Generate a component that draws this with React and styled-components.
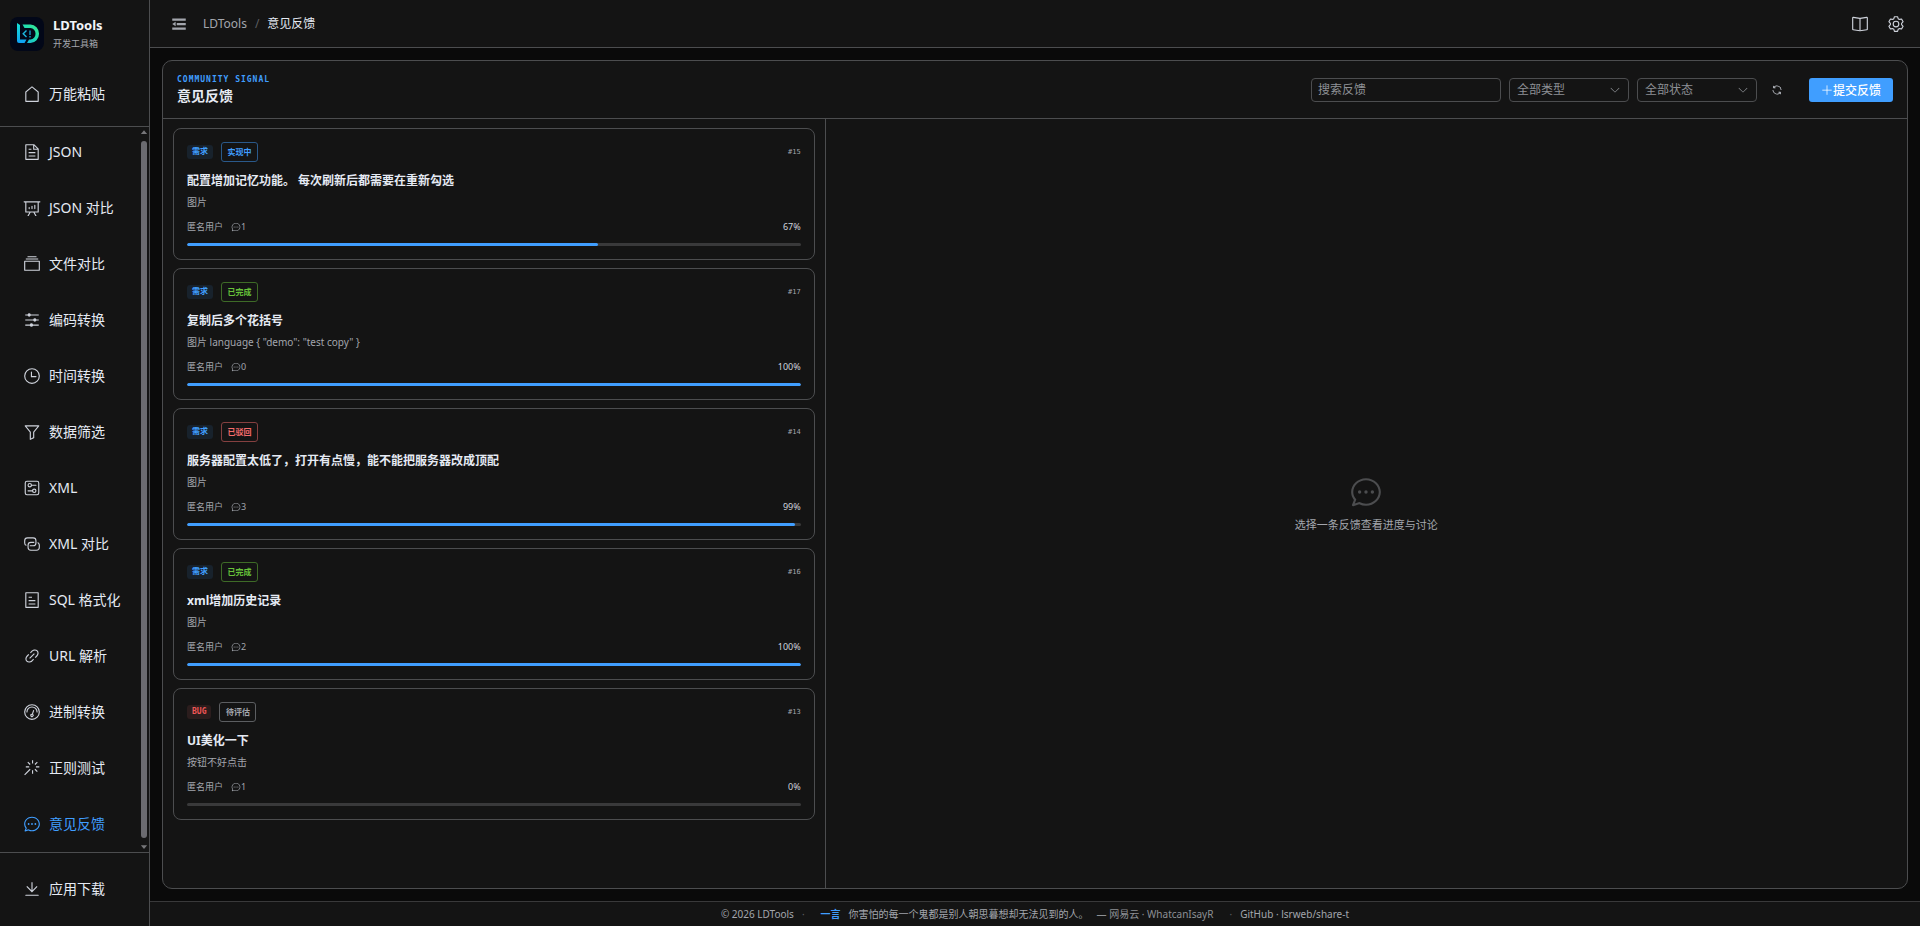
import React, { useState } from "react";
import styled, { createGlobalStyle } from "styled-components";

const icons = {
  house: ["M192 413.952V896h640V413.952L512 147.328zM139.52 374.4l352-293.312a32 32 0 0 1 40.96 0l352 293.312A32 32 0 0 1 896 398.976V928a32 32 0 0 1-32 32H160a32 32 0 0 1-32-32V398.976a32 32 0 0 1 11.52-24.576"],
  document: ["M832 384H576V128H192v768h640zm-26.496-64L640 154.496V320zM160 64h480l256 256v608a32 32 0 0 1-32 32H160a32 32 0 0 1-32-32V96a32 32 0 0 1 32-32m160 448h384v64H320zm0-192h160v64H320zm0 384h384v64H320z"],
  board: ["m665.216 768 110.848 192h-73.856L591.36 768H433.024L322.176 960H248.32l110.848-192H160a32 32 0 0 1-32-32V192H64a32 32 0 0 1 0-64h896a32 32 0 1 1 0 64h-64v544a32 32 0 0 1-32 32zM832 192H192v512h640zM352 448a32 32 0 0 1 32 32v64a32 32 0 0 1-64 0v-64a32 32 0 0 1 32-32m160-64a32 32 0 0 1 32 32v128a32 32 0 0 1-64 0V416a32 32 0 0 1 32-32m160-64a32 32 0 0 1 32 32v192a32 32 0 1 1-64 0V352a32 32 0 0 1 32-32"],
  files: ["M128 384v448h768V384zm-32-64h832a32 32 0 0 1 32 32v512a32 32 0 0 1-32 32H96a32 32 0 0 1-32-32V352a32 32 0 0 1 32-32m64-128h704v64H160zm96-128h512v64H256z"],
  operation: ["M389.44 768a96.064 96.064 0 0 1 181.12 0H896v64H570.56a96.064 96.064 0 0 1-181.12 0H128v-64zm192-288a96.064 96.064 0 0 1 181.12 0H896v64H762.56a96.064 96.064 0 0 1-181.12 0H128v-64zm-320-288a96.064 96.064 0 0 1 181.12 0H896v64H442.56a96.064 96.064 0 0 1-181.12 0H128v-64z"],
  clock: [
    "M512 896a384 384 0 1 0 0-768 384 384 0 0 0 0 768m0 64a448 448 0 1 1 0-896 448 448 0 0 1 0 896",
    "M480 256a32 32 0 0 1 32 32v256a32 32 0 0 1-64 0V288a32 32 0 0 1 32-32",
    "M480 512h256q32 0 32 32t-32 32H480q-32 0-32-32t32-32",
  ],
  filter: ["M384 523.392V928a32 32 0 0 0 46.336 28.608l192-96A32 32 0 0 0 640 832V523.392l280.768-343.104A32 32 0 0 0 896 128H128a32 32 0 0 0-24.768 52.288zM448 512a32 32 0 0 0-7.232-20.288L195.52 192h632.96L583.232 491.712A32 32 0 0 0 576 512v300.224l-128 64z"],
  setUp: [
    "M224 160a64 64 0 0 0-64 64v576a64 64 0 0 0 64 64h576a64 64 0 0 0 64-64V224a64 64 0 0 0-64-64zm0-64h576a128 128 0 0 1 128 128v576a128 128 0 0 1-128 128H224A128 128 0 0 1 96 800V224A128 128 0 0 1 224 96",
    "M384 416a64 64 0 1 0 0-128 64 64 0 0 0 0 128m0 64a128 128 0 1 1 0-256 128 128 0 0 1 0 256",
    "M480 320h256q32 0 32 32t-32 32H480q-32 0-32-32t32-32m160 416a64 64 0 1 0 0-128 64 64 0 0 0 0 128m0 64a128 128 0 1 1 0-256 128 128 0 0 1 0 256",
    "M288 640h256q32 0 32 32t-32 32H288q-32 0-32-32t32-32",
  ],
  connection: [
    "M640 384v64H448a128 128 0 0 0-128 128v128a128 128 0 0 0 128 128h320a128 128 0 0 0 128-128V576a128 128 0 0 0-64-110.848V394.88c74.56 26.368 128 97.472 128 181.056v128a192 192 0 0 1-192 192H448a192 192 0 0 1-192-192V576a192 192 0 0 1 192-192z",
    "M384 640v-64h192a128 128 0 0 0 128-128V320a128 128 0 0 0-128-128H256a128 128 0 0 0-128 128v128a128 128 0 0 0 64 110.848v70.272A192.06 192.06 0 0 1 64 448V320a192 192 0 0 1 192-192h320a192 192 0 0 1 192 192v128a192 192 0 0 1-192 192z",
  ],
  tickets: ["M192 128v768h640V128zm-32-64h704a32 32 0 0 1 32 32v832a32 32 0 0 1-32 32H160a32 32 0 0 1-32-32V96a32 32 0 0 1 32-32m160 448h384v64H320zm0-192h192v64H320zm0 384h384v64H320z"],
  link: ["M715.648 625.152 670.4 579.904l90.496-90.56c75.008-74.944 85.12-186.368 22.656-248.896-62.528-62.464-173.952-52.352-248.96 22.656L444.16 353.6l-45.248-45.248 90.496-90.496c100.032-99.968 251.968-110.08 339.456-22.656 87.488 87.488 77.312 239.424-22.656 339.456l-90.496 90.496zm-90.496 90.496-90.496 90.496C434.624 906.112 282.688 916.224 195.2 828.8c-87.488-87.488-77.312-239.424 22.656-339.456l90.496-90.496 45.248 45.248-90.496 90.56c-75.008 74.944-85.12 186.368-22.656 248.896 62.528 62.464 173.952 52.352 248.96-22.656l90.496-90.496zm0-362.048 45.248 45.248L398.848 670.4 353.6 625.152z"],
  odometer: [
    "M512 896a384 384 0 1 0 0-768 384 384 0 0 0 0 768m0 64a448 448 0 1 1 0-896 448 448 0 0 1 0 896",
    "M192 512a320 320 0 1 1 640 0 32 32 0 1 1-64 0 256 256 0 1 0-512 0 32 32 0 0 1-64 0",
    "M570.432 627.84A96 96 0 1 1 509.568 608l60.992-187.776A32 32 0 1 1 631.424 440l-60.992 187.776zM502.08 734.464a32 32 0 1 0 19.84-60.928 32 32 0 0 0-19.84 60.928",
  ],
  magic: ["M512 64h64v192h-64zm0 576h64v192h-64zM160 480v-64h192v64zm576 0v-64h192v64zM249.856 199.04l45.248-45.184L430.848 289.6 385.6 334.848 249.856 199.104zM657.152 606.4l45.248-45.248 135.744 135.744-45.248 45.248zM114.048 923.2 68.8 877.952l316.8-316.8 45.248 45.248zM702.4 334.848 657.152 289.6l135.744-135.744 45.248 45.248z"],
  chat: [
    "m174.72 855.68 135.296-45.12 23.68 11.84C388.096 849.536 448.576 864 512 864c211.84 0 384-166.784 384-352S723.84 160 512 160 128 326.784 128 512c0 69.12 24.96 139.264 70.848 199.232l22.08 28.8-46.272 115.584zm-45.248 82.56A32 32 0 0 1 89.6 896l58.368-145.92C94.72 680.32 64 596.864 64 512 64 299.904 256 96 512 96s448 203.904 448 416-192 416-448 416a461.06 461.06 0 0 1-206.912-48.384l-175.616 58.56z",
    "M512 563.2a51.2 51.2 0 1 1 0-102.4 51.2 51.2 0 0 1 0 102.4m192 0a51.2 51.2 0 1 1 0-102.4 51.2 51.2 0 0 1 0 102.4m-384 0a51.2 51.2 0 1 1 0-102.4 51.2 51.2 0 0 1 0 102.4",
  ],
  download: ["M160 832h704a32 32 0 1 1 0 64H160a32 32 0 1 1 0-64m384-253.696 236.288-236.352 45.248 45.248L508.8 704 192 387.2l45.248-45.248L480 584.704V128h64z"],
  fold: ["M896 192H128v128h768zm0 256H384v128h512zm0 256H128v128h768zM320 384 128 512l192 128z"],
  reading: [
    "m512 863.36 384-54.848v-638.72L525.568 222.72a96 96 0 0 1-27.136 0L128 169.792v638.72zM137.024 106.432l370.432 52.928a32 32 0 0 0 9.088 0l370.432-52.928A64 64 0 0 1 960 169.792v638.72a64 64 0 0 1-54.976 63.36l-388.48 55.488a32 32 0 0 1-9.088 0l-388.48-55.488A64 64 0 0 1 64 808.512v-638.72a64 64 0 0 1 73.024-63.36",
    "M480 192h64v704h-64z",
  ],
  setting: ["M600.704 64a32 32 0 0 1 30.464 22.208l35.2 109.376c14.784 7.232 28.928 15.36 42.432 24.512l112.384-24.192a32 32 0 0 1 34.432 15.36L944.32 364.8a32 32 0 0 1-4.032 37.504l-77.12 85.12a357.12 357.12 0 0 1 0 49.024l77.12 85.248a32 32 0 0 1 4.032 37.504l-88.704 153.6a32 32 0 0 1-34.432 15.296L708.8 803.904c-13.44 9.088-27.648 17.28-42.368 24.512l-35.264 109.376A32 32 0 0 1 600.704 960H423.296a32 32 0 0 1-30.464-22.208L357.696 828.48a351.616 351.616 0 0 1-42.56-24.64l-112.32 24.256a32 32 0 0 1-34.432-15.36L79.68 659.2a32 32 0 0 1 4.032-37.504l77.12-85.248a357.12 357.12 0 0 1 0-48.896l-77.12-85.248A32 32 0 0 1 79.68 364.8l88.704-153.6a32 32 0 0 1 34.432-15.296l112.32 24.256c13.568-9.152 27.776-17.408 42.56-24.64l35.2-109.312A32 32 0 0 1 423.232 64H600.64zm-23.424 64H446.72l-36.352 113.088-24.512 11.968a294.113 294.113 0 0 0-34.816 20.096l-22.656 15.36-116.224-25.088-65.28 113.152 79.68 88.192-1.92 27.136a293.12 293.12 0 0 0 0 40.192l1.92 27.136-79.808 88.192 65.344 113.152 116.224-25.024 22.656 15.296a294.113 294.113 0 0 0 34.816 20.096l24.512 11.968L446.72 896h130.688l36.48-113.152 24.448-11.904a288.282 288.282 0 0 0 34.752-20.096l22.592-15.296 116.288 25.024 65.28-113.152-79.744-88.192 1.92-27.136a293.12 293.12 0 0 0 0-40.256l-1.92-27.136 79.808-88.128-65.344-113.152-116.288 24.96-22.592-15.232a287.616 287.616 0 0 0-34.752-20.096l-24.448-11.904L577.344 128zM512 320a192 192 0 1 1 0 384 192 192 0 0 1 0-384m0 64a128 128 0 1 0 0 256 128 128 0 0 0 0-256"],
  refresh: ["M771.776 794.88A384 384 0 0 1 128 512h64a320 320 0 0 0 555.712 216.448H654.72a32 32 0 1 1 0-64h149.056a32 32 0 0 1 32 32v148.928a32 32 0 1 1-64 0v-50.56zM276.288 295.616h92.992a32 32 0 0 1 0 64H220.16a32 32 0 0 1-32-32V178.56a32 32 0 0 1 64 0v50.56A384 384 0 0 1 896.128 512h-64a320 320 0 0 0-555.776-216.384z"],
  arrowDown: ["M831.872 340.864 512 652.672 192.128 340.864a30.59 30.59 0 0 0-42.752 0 29.12 29.12 0 0 0 0 41.6L489.664 714.24a32 32 0 0 0 44.672 0l340.288-331.712a29.12 29.12 0 0 0 0-41.728 30.59 30.59 0 0 0-42.752 0z"],
  plus: ["M480 480V128a32 32 0 0 1 64 0v352h352a32 32 0 1 1 0 64H544v352a32 32 0 1 1-64 0V544H128a32 32 0 0 1 0-64z"],
  caretUp: ["M512 320 832 704H192z"],
  caretDown: ["M512 704 192 320h640z"],
};

const Icon = ({ name, size = 18 }) => (
  <Svg viewBox="0 0 1024 1024" width={size} height={size} aria-hidden="true">
    {icons[name].map((d) => (
      <path key={d} d={d} />
    ))}
  </Svg>
);

const Logo = () => (
  <Svg viewBox="0 0 34 34" width="34" height="34" aria-hidden="true">
    <defs>
      <linearGradient id="logoL" x1="0" y1="0" x2="0" y2="1">
        <stop offset="0" stopColor="#14e0d8" />
        <stop offset="1" stopColor="#0ea0f5" />
      </linearGradient>
      <linearGradient id="logoD" x1="0" y1="1" x2="1" y2="0">
        <stop offset="0" stopColor="#18a8e8" />
        <stop offset="0.5" stopColor="#1fdcb4" />
        <stop offset="1" stopColor="#3be88a" />
      </linearGradient>
    </defs>
    <rect width="34" height="34" rx="8" fill="#020718" />
    <path d="M7 6l3 2v14.500h6.500L14.500 26H9a2 2 0 0 1-2-2z" fill="url(#logoL)" />
    <path d="M12.500 7.500h8a8.500 9.200 0 0 1 0 18.500h-3.500l2-3.500h1.500a5 5.700 0 0 0 0-11.500h-6z" fill="url(#logoD)" />
    <path d="M16.500 13.500L13.200 16.800l3.300 3.200" fill="none" stroke="#1cb8e0" strokeWidth="1.400" />
    <path d="M20 13.500v4.500M20 19v1.500" fill="none" stroke="#17a9d0" strokeWidth="1.300" />
  </Svg>
);

const menu = [
  { icon: "document", label: "JSON" },
  { icon: "board", label: "JSON 对比" },
  { icon: "files", label: "文件对比" },
  { icon: "operation", label: "编码转换" },
  { icon: "clock", label: "时间转换" },
  { icon: "filter", label: "数据筛选" },
  { icon: "setUp", label: "XML" },
  { icon: "connection", label: "XML 对比" },
  { icon: "tickets", label: "SQL 格式化" },
  { icon: "link", label: "URL 解析" },
  { icon: "odometer", label: "进制转换" },
  { icon: "magic", label: "正则测试" },
  { icon: "chat", label: "意见反馈", active: true },
];

const feedbacks = [
  { id: 15, type: "需求", status: "实现中", tone: "primary", title: "配置增加记忆功能。 每次刷新后都需要在重新勾选", desc: "图片", comments: 1, progress: 67 },
  { id: 17, type: "需求", status: "已完成", tone: "success", title: "复制后多个花括号", desc: '图片 language { "demo": "test copy" }', comments: 0, progress: 100 },
  { id: 14, type: "需求", status: "已驳回", tone: "danger", title: "服务器配置太低了，打开有点慢，能不能把服务器改成顶配", desc: "图片", comments: 3, progress: 99 },
  { id: 16, type: "需求", status: "已完成", tone: "success", title: "xml增加历史记录", desc: "图片", comments: 2, progress: 100 },
  { id: 13, type: "BUG", status: "待评估", tone: "info", title: "UI美化一下", desc: "按钮不好点击", comments: 1, progress: 0 },
];

const tones = {
  primary: { color: "#409eff", border: "#2a598a" },
  success: { color: "#67c23a", border: "#3e6b27" },
  danger: { color: "#f56c6c", border: "#854040" },
  info: { color: "#a3a6ad", border: "#5c5e61" },
};

const MenuItem = ({ icon, label, active }) => (
  <MenuLink href="#" $active={active} aria-current={active ? "page" : undefined}>
    <Icon name={icon} />
    <span>{label}</span>
  </MenuLink>
);

const FeedbackCard = ({ item }) => (
  <Card>
    <CardTop>
      <TypeTag $bug={item.type === "BUG"}>{item.type}</TypeTag>
      <StatusTag $tone={tones[item.tone]}>{item.status}</StatusTag>
      <CardId>#{item.id}</CardId>
    </CardTop>
    <CardTitle>{item.title}</CardTitle>
    <CardDesc>{item.desc}</CardDesc>
    <CardMeta>
      <span>匿名用户</span>
      <Comments>
        <Icon name="chat" size={10} />
        {item.comments}
      </Comments>
      <Percent>{item.progress}%</Percent>
    </CardMeta>
    <Track>
      <Bar style={{ width: `${item.progress}%` }} />
    </Track>
  </Card>
);

const Filter = ({ label, options }) => (
  <SelectBox>
    <Select aria-label={label} defaultValue={options[0]}>
      {options.map((o) => (
        <option key={o}>{o}</option>
      ))}
    </Select>
    <SelectArrow>
      <Icon name="arrowDown" size={12} />
    </SelectArrow>
  </SelectBox>
);

const App = () => {
  const [keyword, setKeyword] = useState("");

  return (
    <Shell>
      <GlobalStyle />
      <Sidebar>
        <Brand>
          <Logo />
          <div>
            <BrandName>LDTools</BrandName>
            <BrandSub>开发工具箱</BrandSub>
          </div>
        </Brand>
        <MenuTop>
          <MenuItem icon="house" label="万能粘贴" />
        </MenuTop>
        <MenuScroll>
          <MenuList>
            {menu.map((m) => (
              <MenuItem key={m.label} {...m} />
            ))}
          </MenuList>
          <Rail aria-hidden="true">
            <Icon name="caretUp" size={10} />
            <Thumb />
            <Icon name="caretDown" size={10} />
          </Rail>
        </MenuScroll>
        <MenuBottom>
          <MenuItem icon="download" label="应用下载" />
        </MenuBottom>
      </Sidebar>

      <Main>
        <Header>
          <IconButton aria-label="折叠菜单" $muted>
            <Icon name="fold" />
          </IconButton>
          <Crumbs>
            <CrumbLink href="#">LDTools</CrumbLink>
            <Slash>/</Slash>
            <span>意见反馈</span>
          </Crumbs>
          <HeaderActions>
            <IconButton aria-label="文档">
              <Icon name="reading" />
            </IconButton>
            <IconButton aria-label="设置">
              <Icon name="setting" />
            </IconButton>
          </HeaderActions>
        </Header>

        <Content>
          <Panel>
            <PanelHead>
              <div>
                <Eyebrow>COMMUNITY SIGNAL</Eyebrow>
                <PanelTitle>意见反馈</PanelTitle>
              </div>
              <Toolbar>
                <Search
                  aria-label="搜索反馈"
                  placeholder="搜索反馈"
                  value={keyword}
                  onChange={(e) => setKeyword(e.target.value)}
                />
                <Filter label="类型" options={["全部类型", "需求", "BUG"]} />
                <Filter label="状态" options={["全部状态", "待评估", "实现中", "已完成", "已驳回"]} />
                <RefreshButton aria-label="刷新">
                  <Icon name="refresh" size={12} />
                </RefreshButton>
                <SubmitButton>
                  <Icon name="plus" size={12} />
                  提交反馈
                </SubmitButton>
              </Toolbar>
            </PanelHead>
            <PanelBody>
              <List>
                {feedbacks.map((f) => (
                  <FeedbackCard key={f.id} item={f} />
                ))}
              </List>
              <Empty>
                <Icon name="chat" size={34} />
                <EmptyText>选择一条反馈查看进度与讨论</EmptyText>
              </Empty>
            </PanelBody>
          </Panel>
        </Content>

        <Footer>
          <span>© 2026 LDTools</span>
          <Dot>·</Dot>
          <Quote>
            <QuoteTag>一言</QuoteTag>
            <span>你害怕的每一个鬼都是别人朝思暮想却无法见到的人。</span>
            <QuoteFrom>— 网易云 · WhatcanIsayR</QuoteFrom>
          </Quote>
          <Dot>·</Dot>
          <FooterLink href="#">GitHub · lsrweb/share-t</FooterLink>
        </Footer>
      </Main>
    </Shell>
  );
};

const GlobalStyle = createGlobalStyle`
  * {
    box-sizing: border-box;
  }
  body {
    margin: 0;
    background: #0a0a0a;
    color: #e5eaf3;
    font-family: "Noto Sans", "Noto Sans CJK SC", sans-serif;
    font-size: 12px;
  }
  button, input, select {
    font-family: inherit;
  }
  button {
    padding: 0;
    border: 0;
    background: none;
    cursor: pointer;
  }
  a {
    color: inherit;
    text-decoration: none;
  }
  h1, h2, p {
    margin: 0;
  }
`;

const Svg = styled.svg`
  display: block;
  flex: none;
  fill: currentColor;
`;

const Shell = styled.div`
  display: flex;
  height: 100vh;
`;

const Sidebar = styled.aside`
  display: flex;
  flex-direction: column;
  flex: none;
  width: 150px;
  background: #141414;
  border-right: 1px solid #4c4d4f;
`;

const Brand = styled.div`
  display: flex;
  gap: 9px;
  padding: 17px 10px 15px;
`;

const BrandName = styled.div`
  color: #f2f5fa;
  font-size: 13px;
  font-weight: 700;
  line-height: 16px;
`;

const BrandSub = styled.div`
  margin-top: 4px;
  color: #a3a6ad;
  font-size: 9px;
  line-height: 14px;
`;

const MenuTop = styled.nav`
  padding-bottom: 4px;
  border-bottom: 1px solid #4c4d4f;
`;

const MenuScroll = styled.div`
  display: flex;
  flex: 1;
  min-height: 0;
`;

const MenuList = styled.nav`
  display: flex;
  flex: 1;
  flex-direction: column;
  justify-content: flex-end;
  overflow: hidden;
`;

const MenuBottom = styled.nav`
  padding: 8px 0 9px;
  border-top: 1px solid #4c4d4f;
`;

const MenuLink = styled.a`
  display: flex;
  flex: none;
  align-items: center;
  gap: 8px;
  height: 56px;
  padding-left: 23px;
  color: ${(p) => (p.$active ? "#409eff" : "#e5eaf3")};
  font-size: 14px;
  white-space: nowrap;

  svg {
    color: ${(p) => (p.$active ? "#409eff" : "#cfd3dc")};
  }
  span {
    padding-bottom: 2px;
  }
`;

const Rail = styled.div`
  display: flex;
  flex-direction: column;
  align-items: center;
  gap: 4px;
  width: 10px;
  color: #77777a;
`;

const Thumb = styled.div`
  flex: 1;
  width: 6px;
  border-radius: 3px;
  background: #6b6b70;
`;

const Main = styled.main`
  display: flex;
  flex: 1;
  flex-direction: column;
  min-width: 0;
`;

const Header = styled.header`
  display: flex;
  align-items: center;
  height: 48px;
  padding: 0 15px 0 20px;
  background: #141414;
  border-bottom: 1px solid #4c4d4f;
`;

const IconButton = styled.button`
  color: ${(p) => (p.$muted ? "#a3a6ad" : "#cfd3dc")};
`;

const Crumbs = styled.nav`
  display: flex;
  gap: 8px;
  margin-left: 15px;
  line-height: 18px;
`;

const CrumbLink = styled.a`
  color: #a3a6ad;
`;

const Slash = styled.span`
  color: #5c5e61;
`;

const HeaderActions = styled.div`
  display: flex;
  gap: 18px;
  margin-left: auto;
`;

const Content = styled.div`
  display: flex;
  flex: 1;
  min-height: 0;
  padding: 12px;
`;

const Panel = styled.section`
  display: flex;
  flex: 1;
  flex-direction: column;
  border: 1px solid #4c4d4f;
  border-radius: 10px;
  background: #141414;
  overflow: hidden;
`;

const PanelHead = styled.div`
  display: flex;
  align-items: center;
  justify-content: space-between;
  height: 58px;
  padding: 0 14px;
  border-bottom: 1px solid #4c4d4f;
`;

const Eyebrow = styled.p`
  color: #409eff;
  font-family: "DejaVu Sans Mono", monospace;
  font-size: 8px;
  font-weight: 700;
  letter-spacing: 1px;
  line-height: 12px;
`;

const PanelTitle = styled.h1`
  font-size: 14px;
  font-weight: 700;
  line-height: 20px;
`;

const Toolbar = styled.div`
  display: flex;
  align-items: center;
  gap: 8px;
`;

const Search = styled.input`
  width: 190px;
  height: 24px;
  padding: 0 6px;
  border: 1px solid #4c4d4f;
  border-radius: 4px;
  background: transparent;
  color: #cfd3dc;
  font-size: 12px;

  &::placeholder {
    color: #8d9095;
  }
`;

const SelectBox = styled.div`
  display: grid;
  align-items: center;
  width: 120px;
`;

const Select = styled.select`
  grid-area: 1 / 1;
  height: 24px;
  padding: 0 7px;
  border: 1px solid #4c4d4f;
  border-radius: 4px;
  appearance: none;
  background: transparent;
  color: #8d9095;
  font-size: 12px;
`;

const SelectArrow = styled.span`
  grid-area: 1 / 1;
  justify-self: end;
  margin-right: 8px;
  color: #8d9095;
  pointer-events: none;
`;

const RefreshButton = styled.button`
  display: grid;
  place-items: center;
  width: 24px;
  height: 24px;
  color: #cfd3dc;
`;

const SubmitButton = styled.button`
  display: flex;
  align-items: center;
  height: 24px;
  margin-left: 12px;
  padding: 0 12px;
  border-radius: 3px;
  background: #409eff;
  color: #fff;
  font-size: 12px;
  font-weight: 500;
`;

const PanelBody = styled.div`
  display: flex;
  flex: 1;
  min-height: 0;
`;

const List = styled.div`
  display: flex;
  flex-direction: column;
  gap: 8px;
  width: 38%;
  padding: 9px 10px;
  border-right: 1px solid #4c4d4f;
  overflow: hidden;
`;

const Card = styled.article`
  flex: none;
  padding: 13px;
  border: 1px solid #4c4d4f;
  border-radius: 8px;
`;

const CardTop = styled.div`
  display: flex;
  align-items: center;
  gap: 8px;
  height: 20px;
`;

const TypeTag = styled.span`
  padding: 0 5px;
  border-radius: 3px;
  background: ${(p) => (p.$bug ? "#2b1d1d" : "#18222c")};
  color: ${(p) => (p.$bug ? "#f05656" : "#409eff")};
  font-family: "DejaVu Sans Mono", "Noto Sans CJK SC", monospace;
  font-size: 8px;
  font-weight: 700;
  line-height: 14px;
`;

const StatusTag = styled.span`
  min-width: 37px;
  border: 1px solid ${(p) => p.$tone.border};
  border-radius: 3px;
  color: ${(p) => p.$tone.color};
  font-size: 8px;
  font-weight: 700;
  line-height: 18px;
  text-align: center;
`;

const CardId = styled.span`
  margin-left: auto;
  color: #a3a6ad;
  font-family: "DejaVu Sans Mono", monospace;
  font-size: 7px;
`;

const CardTitle = styled.h2`
  margin-top: 9px;
  font-size: 12px;
  font-weight: 700;
  line-height: 20px;
`;

const CardDesc = styled.p`
  margin-top: 3px;
  color: #a3a6ad;
  font-size: 10px;
  line-height: 16px;
`;

const CardMeta = styled.div`
  display: flex;
  gap: 8px;
  margin-top: 10px;
  color: #a3a6ad;
  font-size: 9px;
  line-height: 14px;
`;

const Comments = styled.span`
  display: flex;
  align-items: center;
`;

const Percent = styled.span`
  margin-left: auto;
  color: #cfd3dc;
`;

const Track = styled.div`
  height: 3px;
  margin-top: 9px;
  border-radius: 2px;
  background: #39393a;
  overflow: hidden;
`;

const Bar = styled.div`
  height: 100%;
  border-radius: 2px;
  background: #409eff;
`;

const Empty = styled.div`
  display: flex;
  flex: 1;
  flex-direction: column;
  align-items: center;
  justify-content: center;
  gap: 8px;
  color: #4c4d4f;
`;

const EmptyText = styled.p`
  color: #a3a6ad;
  font-size: 11px;
  line-height: 16px;
`;

const Footer = styled.footer`
  display: flex;
  align-items: center;
  justify-content: center;
  gap: 8px;
  height: 25px;
  border-top: 1px solid #39393a;
  background: #141414;
  color: #a3a6ad;
  font-size: 10px;
  line-height: 16px;
`;

const Dot = styled.span`
  color: #5c5e61;
`;

const Quote = styled.span`
  display: flex;
  gap: 8px;
  padding: 0 8px;
`;

const QuoteTag = styled.span`
  color: #409eff;
  font-weight: 700;
`;

const QuoteFrom = styled.span`
  color: #8d9095;
`;

const FooterLink = styled.a`
  color: #a3a6ad;
`;

export default App;
